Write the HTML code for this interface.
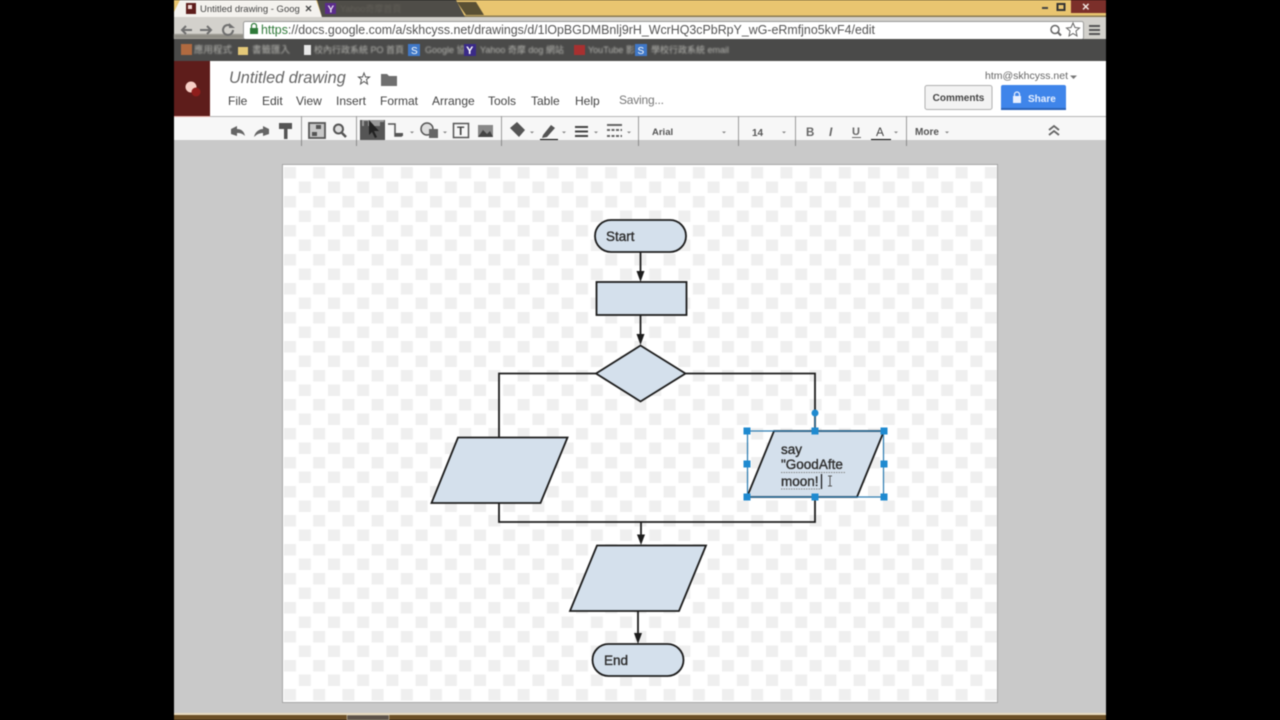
<!DOCTYPE html>
<html><head><meta charset="utf-8"><style>
html,body{margin:0;padding:0;background:#000;width:1280px;height:720px;overflow:hidden}
svg{display:block}
text{font-family:"Liberation Sans","Noto Sans CJK TC",sans-serif}
</style></head><body>
<svg width="1280" height="720" viewBox="0 0 1280 720" xmlns="http://www.w3.org/2000/svg">
<defs>
<pattern id="chk" x="284" y="167" width="29.2" height="29" patternUnits="userSpaceOnUse">
<rect x="0" y="0" width="12" height="11.5" fill="#efefef"/>
<rect x="14.8" y="14.5" width="12" height="11.5" fill="#efefef"/>
</pattern>
<filter id="b1" color-interpolation-filters="sRGB"><feGaussianBlur stdDeviation="0.8"/></filter>
<filter id="b0" color-interpolation-filters="sRGB"><feGaussianBlur stdDeviation="0.3"/></filter>
<filter id="all" filterUnits="userSpaceOnUse" x="0" y="0" width="1280" height="720" color-interpolation-filters="sRGB"><feGaussianBlur stdDeviation="0.4"/></filter>
</defs>
<g filter="url(#all)">
<rect x="174" y="0" width="932" height="720" fill="#c9c9c9"/>
<!-- title bar -->
<rect x="174" y="0" width="932" height="17" fill="#e9c570"/>
<rect x="174" y="15.500" width="932" height="1.500" fill="#8a7a50"/>
<path d="M174 17V12L180 0H316L322 17Z" fill="#f4f2ee"/>
<path d="M322 17L317 0H456L465 17Z" fill="#4f4d48"/>
<path d="M457 2H476L484 15H466Z" fill="#5a5034"/>
<rect x="186" y="3" width="10" height="11" fill="#5e1d1b"/>
<rect x="188" y="5" width="4" height="4" fill="#f1d9d6"/>
<text x="200" y="12" font-size="9.500" fill="#444">Untitled drawing - Goog</text>
<text x="305" y="12.500" font-size="12" font-weight="bold" fill="#444">×</text>
<rect x="325" y="3" width="11" height="11" fill="#5b2c8c"/>
<text x="327.500" y="12.500" font-size="10" font-weight="bold" fill="#e8e0f0">Y</text>
<text x="340" y="12" font-size="9" fill="#625f58" filter="url(#b1)">Yahoo奇摩首頁</text>
<!-- window controls -->
<rect x="1071" y="0" width="35" height="13" fill="#7b2f2a"/>
<text x="1082" y="11" font-size="13" font-weight="bold" fill="#f2e6e2">×</text>
<rect x="1042" y="7" width="6" height="2" fill="#444"/>
<rect x="1057.500" y="4" width="7" height="6" fill="none" stroke="#333" stroke-width="2"/>
<!-- toolbar -->
<rect x="174" y="17" width="932" height="22" fill="#d3d1cc"/>
<rect x="174" y="34" width="70" height="5" fill="#8f8d86" filter="url(#b1)"/>
<path d="M192 30H182M186 26L182 30L186 34" fill="none" stroke="#707070" stroke-width="2"/>
<path d="M200 30H211M207 26L211 30L207 34" fill="none" stroke="#707070" stroke-width="2"/>
<path d="M233 30A5 5 0 1 1 231 26" fill="none" stroke="#707070" stroke-width="2"/>
<path d="M229 23V28H235Z" fill="#707070"/>
<rect x="243.500" y="21.500" width="840" height="18" rx="2" fill="#fff" stroke="#9a9a98"/>
<rect x="250" y="28" width="8" height="6" fill="#2f7a3a"/>
<path d="M251.500 28V26A2.500 2.500 0 0 1 256.500 26V28" fill="none" stroke="#2f7a3a" stroke-width="1.200"/>
<text x="261" y="34" font-size="13" fill="#555" textLength="614" lengthAdjust="spacingAndGlyphs"><tspan fill="#2f7a3a">https</tspan>://docs.google.com/a/skhcyss.net/drawings/d/1lOpBGDMBnlj9rH_WcrHQ3cPbRpY_wG-eRmfjno5kvF4/edit</text>
<circle cx="1055" cy="29.500" r="4" fill="none" stroke="#666" stroke-width="1.500"/>
<path d="M1058 32.500L1061 35.500" stroke="#666" stroke-width="2"/>
<path d="M1073 23L1075 27.500L1079.500 28L1076 31L1077 36L1073 33.500L1069 36L1070 31L1066.500 28L1071 27.500Z" fill="#fff" stroke="#666"/>
<path d="M1089 26H1100M1089 30H1100M1089 34H1100" stroke="#555" stroke-width="2"/>
<!-- bookmarks -->
<rect x="174" y="39" width="932" height="22" fill="#4a4a49"/>
<rect x="181" y="44" width="11" height="11" fill="#b06a40" filter="url(#b0)"/>
<text x="194" y="53" font-size="9.500" fill="#b5b5b0" filter="url(#b1)">應用程式</text>
<rect x="238" y="47" width="10" height="8" fill="#e4c878"/>
<text x="252" y="53" font-size="9.500" fill="#b5b5b0" filter="url(#b1)">書籤匯入</text>
<rect x="304" y="45" width="7" height="10" fill="#e8e8e8"/>
<text x="314" y="53" font-size="9" fill="#b5b5b0" filter="url(#b1)">校內行政系統 PO 首頁</text>
<rect x="408" y="44" width="12" height="12" fill="#3f78c8"/>
<text x="411" y="54" font-size="10" fill="#fff">S</text>
<text x="425" y="53" font-size="9" fill="#b5b5b0" filter="url(#b1)">Google 協</text>
<rect x="464" y="44" width="12" height="12" fill="#3a2a88"/>
<text x="466" y="54" font-size="11" font-weight="bold" fill="#fff">Y</text>
<text x="480" y="53" font-size="9" fill="#b5b5b0" filter="url(#b1)">Yahoo 奇摩 dog 網站</text>
<rect x="574" y="45" width="11" height="10" fill="#a83030"/>
<text x="588" y="53" font-size="9" fill="#b5b5b0" filter="url(#b1)">YouTube 影</text>
<rect x="635" y="44" width="12" height="12" fill="#3f78c8"/>
<text x="637.500" y="54" font-size="10" fill="#fff">S</text>
<text x="651" y="53" font-size="9" fill="#b5b5b0" filter="url(#b1)">學校行政系統 email</text>
<!-- app header -->
<rect x="174" y="61" width="932" height="55" fill="#fff"/>
<rect x="174" y="61" width="36" height="55" fill="#5e1d1b"/>
<circle cx="191" cy="87" r="5.500" fill="#f7cfc6"/>
<circle cx="196" cy="92" r="4.500" fill="#8f1e1c"/>
<text x="229" y="83" font-size="16.300" font-style="italic" fill="#666">Untitled drawing</text>
<path d="M364 73L365.500 77H369.500L366.500 79.500L367.500 84L364 81.500L360.500 84L361.500 79.500L358.500 77H362.500Z" fill="#fff" stroke="#555"/>
<path d="M381 74H387L389 76H397V86H381Z" fill="#6f6f6f"/>
<g font-size="12" fill="#444">
<text x="228" y="105">File</text><text x="262" y="105">Edit</text><text x="296" y="105">View</text><text x="336" y="105">Insert</text><text x="380" y="105">Format</text><text x="432" y="105">Arrange</text><text x="488" y="105">Tools</text><text x="531" y="105">Table</text><text x="575" y="105">Help</text>
</g>
<text x="619" y="104" font-size="12" fill="#777" textLength="45">Saving...</text>
<text x="985" y="79" font-size="10.500" fill="#666">htm@skhcyss.net</text>
<path d="M1070 75.500H1077L1073.500 79Z" fill="#777"/>
<rect x="925" y="85.500" width="67" height="24" rx="2" fill="#f3f3f3" stroke="#b0b0b0"/>
<text x="958.500" y="101" font-size="10" font-weight="bold" fill="#444" text-anchor="middle">Comments</text>
<rect x="1001" y="85" width="65" height="25" rx="2" fill="#3f85ea"/>
<rect x="1001" y="108" width="65" height="2" fill="#2a62b8"/>
<rect x="1013" y="96" width="8" height="7" fill="#e8f0ff"/>
<path d="M1014.500 96V94.500A2.500 2.500 0 0 1 1019.500 94.500V96" fill="none" stroke="#e8f0ff" stroke-width="1.200"/>
<text x="1028" y="102" font-size="10" font-weight="bold" fill="#e8f0ff">Share</text>
<!-- format toolbar -->
<rect x="174" y="116" width="932" height="25" fill="#f7f7f7"/>
<rect x="210" y="116" width="896" height="1" fill="#b5b5b5"/>
<rect x="174" y="116" width="36" height="1" fill="#e8b0a8"/>
<g fill="#9a9a9a">
<rect x="301" y="116" width="1" height="30"/><rect x="356" y="116" width="1" height="30"/><rect x="501" y="116" width="1" height="30"/><rect x="638" y="116" width="1" height="30"/><rect x="738" y="116" width="1" height="30"/><rect x="795" y="116" width="1" height="30"/><rect x="906" y="116" width="1" height="30"/>
</g>
<!-- toolbar icons -->
<path d="M231 134V129L237 126V129C241 129 244 131 245 136C242 133 239 133 237 133V136Z" fill="#666"/>
<path d="M269 134V129L263 126V129C259 129 255 132 254 137C257 134 260 133 263 133V136Z" fill="#666"/>
<rect x="279" y="123" width="13" height="6" fill="#555"/><rect x="284" y="129" width="3.500" height="10" fill="#555"/>
<rect x="309" y="123" width="16" height="15" fill="#c8c8c8" stroke="#555" stroke-width="1.800"/>
<rect x="316" y="125" width="5" height="4" fill="#555"/><rect x="312" y="132" width="5" height="4" fill="#555"/>
<circle cx="338.500" cy="129" r="4.500" fill="#ddd" stroke="#555" stroke-width="2"/>
<path d="M342 133L346 137" stroke="#555" stroke-width="2.500"/>
<rect x="360" y="120" width="25" height="23" fill="#555"/>
<path d="M362 120V126H364V121H368V126H380V122H384V120Z" fill="#999"/>
<path d="M369 120V135L372 132L375 138L377 137L374 131H379Z" fill="#222"/>
<path d="M388 124H395V136H402" fill="none" stroke="#555" stroke-width="1.500"/>
<rect x="395" y="133" width="8" height="3" fill="#555"/>
<path d="M410 131.500H414L412 133.500Z M443 131.500H447L445 133.500Z M530 131.500H534L532 133.500Z M562 131.500H566L564 133.500Z M594 131.500H598L596 133.500Z M627 131.500H631L629 133.500Z M722 131.500H726L724 133.500Z M782 131.500H786L784 133.500Z M894 131.500H898L896 133.500Z M945 131.500H949L947 133.500Z" fill="#888"/>
<circle cx="427" cy="129" r="6" fill="#ddd" stroke="#555" stroke-width="1.500"/>
<rect x="429" y="129" width="9" height="9" fill="#666"/>
<rect x="453.500" y="123.500" width="15" height="14" fill="none" stroke="#555" stroke-width="1.500"/>
<text x="457" y="135" font-size="12" font-weight="bold" fill="#444">T</text>
<rect x="478" y="125" width="15" height="12" fill="#888"/>
<path d="M478 137L483 130L487 134L490 131L493 137Z" fill="#444"/>
<path d="M510 128L517 122L525 130L519 137Z" fill="#555"/>
<rect x="508" y="140" width="20" height="9" fill="#e0e0e0" filter="url(#b1)"/>
<path d="M543 135L551 125L555 128L547 137L542 138Z" fill="#555"/>
<rect x="540" y="139" width="18" height="3" fill="#000"/>
<path d="M575 127H588M575 131.500H588M575 136H588" stroke="#444" stroke-width="2"/>
<path d="M607 125H622" stroke="#666" stroke-width="2"/>
<path d="M607 130H622M607 136H622" stroke="#666" stroke-width="2" stroke-dasharray="3 1.500"/>
<text x="652" y="135" font-size="9.500" font-weight="bold" fill="#555">Arial</text>
<text x="752" y="136" font-size="10" font-weight="bold" fill="#555">14</text>
<text x="806" y="136" font-size="11.500" font-weight="bold" fill="#666">B</text>
<text x="829" y="136" font-size="12" font-weight="bold" font-style="italic" fill="#666">I</text>
<text x="852" y="135" font-size="11" font-weight="bold" fill="#666">U</text>
<rect x="852" y="137" width="9" height="1" fill="#666"/>
<text x="876" y="136" font-size="12" fill="#444">A</text>
<rect x="871" y="139" width="20" height="3" fill="#000"/>
<text x="915" y="135" font-size="10" font-weight="bold" fill="#555">More</text>
<path d="M1049 130L1054 126L1059 130M1049 135L1054 131L1059 135" fill="none" stroke="#666" stroke-width="1.800"/>
<!-- canvas area -->
<rect x="174" y="140" width="932" height="573" fill="#c9c9c9"/>
<rect x="301" y="140" width="1" height="6" fill="#8c8c8c"/><rect x="356" y="140" width="1" height="6" fill="#8c8c8c"/><rect x="501" y="140" width="1" height="6" fill="#8c8c8c"/><rect x="638" y="140" width="1" height="6" fill="#8c8c8c"/><rect x="738" y="140" width="1" height="6" fill="#8c8c8c"/><rect x="795" y="140" width="1" height="6" fill="#8c8c8c"/><rect x="906" y="140" width="1" height="6" fill="#8c8c8c"/>
<rect x="282.500" y="164.500" width="715" height="538" fill="#fff" stroke="#a6a6a6"/>
<rect x="283" y="165" width="714" height="537" fill="url(#chk)"/>
<!-- taskbar bottom -->
<rect x="174" y="713" width="932" height="2" fill="#e8dcc0"/>
<rect x="174" y="715" width="932" height="5" fill="#6b4f26"/>
<rect x="347" y="715" width="42" height="5" fill="#5c5248" stroke="#e8dcc0" stroke-width="0.500"/>
<!-- flowchart -->
<g fill="#d4e0ec" stroke="#1c1c1c" stroke-width="1.800">
<rect x="595" y="220" width="91" height="32" rx="16"/>
<rect x="596.500" y="282" width="90" height="33"/>
<path d="M596 373.500L640.500 345.500L685.500 373.500L640.500 401.500Z"/>
<path d="M458 437.500H567.500L540.500 503H431.500Z"/>
<path d="M597 545.500H706L679 611H570Z"/>
<rect x="592.500" y="644" width="91" height="32" rx="16"/>
</g>
<g fill="none" stroke="#1c1c1c" stroke-width="1.800">
<path d="M640.500 252V272"/>
<path d="M640.500 315V335"/>
<path d="M596 373.500H499V437"/>
<path d="M686 373.500H815V430"/>
<path d="M499 503V522H815V497"/>
<path d="M641 522V536"/>
<path d="M638 611V634"/>
</g>
<g fill="#1c1c1c">
<path d="M636.500 271H644.500L640.500 282Z"/>
<path d="M636.500 334H644.500L640.500 345Z"/>
<path d="M637 534.500H645L641 545Z"/>
<path d="M634 633H642L638 644Z"/>
</g>
<!-- selected shape -->
<path d="M774 431H884L857 497H747Z" fill="#d4e0ec" stroke="#1c1c1c" stroke-width="1.800"/>
<rect x="747.500" y="431" width="136" height="66" fill="none" stroke="#2a7ab0" stroke-width="1.200"/>
<path d="M815 412V431" stroke="#2a7ab0" stroke-width="1"/>
<circle cx="815" cy="413" r="3.500" fill="#1f8ad0"/>
<g fill="#1f8ad0">
<rect x="743.500" y="427.500" width="7" height="7"/><rect x="811.500" y="427.500" width="7" height="7"/><rect x="880.500" y="427.500" width="7" height="7"/>
<rect x="743.500" y="460.500" width="7" height="7"/><rect x="880.500" y="460.500" width="7" height="7"/>
<rect x="743.500" y="493.500" width="7" height="7"/><rect x="811.500" y="493.500" width="7" height="7"/><rect x="880.500" y="493.500" width="7" height="7"/>
</g>
<g font-size="13.500" fill="#2c2c2c" stroke="#2c2c2c" stroke-width="0.350">
<text x="606" y="241">Start</text>
<text x="604" y="665">End</text>
<text x="781" y="454">say</text>
<text x="781" y="469">"GoodAfte</text>
<text x="781" y="486">moon!</text>
</g>
<path d="M781 472.500H845" stroke="#888" stroke-width="1" stroke-dasharray="1.500 1"/>
<path d="M781 489H820" stroke="#888" stroke-width="1" stroke-dasharray="1.500 1"/>
<path d="M821.500 474V489" stroke="#111" stroke-width="1.200"/>
<path d="M828 476H832M830 476V486M828 486H832" stroke="#555" stroke-width="1" fill="none"/>
</g>
</svg>
</body></html>
